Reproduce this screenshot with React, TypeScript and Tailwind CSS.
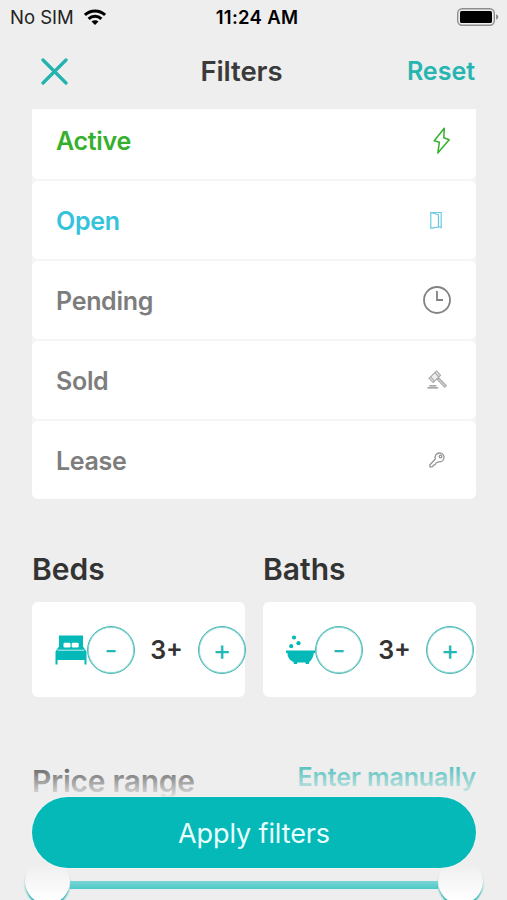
import { useState } from 'react';

const statuses = [
  { name: 'Active', color: 'text-[#35b02c]', icon: <BoltIcon /> },
  { name: 'Open', color: 'text-[#35c3dc]', icon: <DoorIcon /> },
  { name: 'Pending', color: 'text-[#7d7d7d]', icon: <ClockIcon /> },
  { name: 'Sold', color: 'text-[#7d7d7d]', icon: <GavelIcon /> },
  { name: 'Lease', color: 'text-[#7d7d7d]', icon: <KeyIcon /> },
];

function WifiIcon() {
  return (
    <svg width="22" height="16" viewBox="0 0 22 16" fill="none" stroke="#000" strokeWidth="3">
      <path d="M.9 6C6.6.6 15.4.6 21.1 6" />
      <path d="M4.6 9.900c3.600-3.400 9.200-3.400 12.800 0" />
      <path d="M7.5 12.600c2-1.800 5-1.800 7 0L11 16z" fill="#000" stroke="none" />
    </svg>
  );
}

function BatteryIcon() {
  return (
    <svg width="43" height="18" viewBox="0 0 43 18">
      <rect x="0.7" y="0.7" width="36.6" height="16.6" rx="4.5" fill="none" stroke="#8e8e8e" strokeWidth="1.4" />
      <rect x="3" y="3" width="32" height="12" rx="1.6" fill="#000" />
      <path d="M39 6.3q2.4.8 2.4 2.7T39 11.7z" fill="#8e8e8e" />
    </svg>
  );
}

function BoltIcon() {
  return (
    <svg width="18" height="28" viewBox="0 0 18 28" fill="none" stroke="#35b02c" strokeWidth="1.5" strokeLinejoin="round">
      <path d="M11.3 2.300 1.200 14.700l5.200 1.600L4.800 27 16.200 13.800l-5.400-2z" />
    </svg>
  );
}

function DoorIcon() {
  return (
    <svg className="mr-[8px]" width="13" height="18" viewBox="0 0 13 18" fill="none" stroke="#6bcbe2" strokeWidth="1.2">
      <path d="M.8 1.500 8.400 3.800V16L.8 17.200z" />
      <path d="M.8 1.500h10.400v16M11.200 15.800H8.500" />
    </svg>
  );
}

function ClockIcon() {
  return (
    <svg width="28" height="28" viewBox="0 0 28 28" fill="none" stroke="#828282" strokeWidth="1.8">
      <circle cx="14" cy="14" r="13" />
      <path d="M14 5v9h6" />
    </svg>
  );
}

function GavelIcon() {
  return (
    <svg className="mr-[4px]" width="20" height="20" viewBox="0 0 20 20" fill="none" stroke="#a8a8a8" strokeWidth="1.1">
      <path d="m2 8.300 7.500-7.200 4 4.200-7.300 7.200z" fill="#eee" />
      <path d="m3.500 6.800 4.200 4.300M7.800 2.700l4.200 4.300" />
      <path d="m10.300 9.300 7.300 8 1.700-1.700-7.500-7.500z" fill="#d5d5d5" />
      <path d="M2.300 15.800h7M.4 17.800h10.800" stroke="#8c8c8c" strokeWidth="1.2" />
    </svg>
  );
}

function KeyIcon() {
  return (
    <svg className="mr-[6px]" width="16" height="16" viewBox="0 0 16 16" fill="none" stroke="#959595" strokeWidth="1.3" strokeLinejoin="round">
      <path d="M6.3 7C5.4 3.800 7.200 1 10.400 1c3 0 4.800 2.200 4.600 4.800-.3 2.800-2.800 4.300-5.400 4.100L7 11l-.9 1.700-1.500.5-.9 1.500-2.700.3-.2-2z" />
      <circle cx="11.500" cy="4.500" r="1.300" />
    </svg>
  );
}

function BedIcon() {
  return (
    <svg className="shrink-0" width="32" height="30" viewBox="0 0 32 30" fill="#05b9b8">
      <path d="M4 .5h24v11l3.500 5V29.500h-2V25H2.500v4.500H.5V16.500L4 11.500z" />
      <rect x="8.500" y="7.700" width="7" height="4.800" rx="1.200" fill="#fff" />
      <rect x="16.700" y="7.700" width="7" height="4.800" rx="1.200" fill="#fff" />
      <path d="M2.500 15.200h27" stroke="#fff" strokeWidth="0.800" />
    </svg>
  );
}

function BathIcon() {
  return (
    <svg className="shrink-0" width="30" height="30" viewBox="0 0 30 30" fill="#05b9b8">
      <circle cx="9" cy="2.500" r="2.100" />
      <circle cx="13.500" cy="8.200" r="2.100" />
      <circle cx="6.200" cy="11.200" r="2.100" />
      <path d="M1 15.500H30V18h-1.200c-.4 4-2 6.800-4.400 9l-.6 2h-3l-.4-1.400h-8l-.4 1.400H9l-.6-2C5 25.500 2.600 22.500 2.400 18H1z" />
    </svg>
  );
}

function Stepper({ value, onChange }: { value: number; onChange: (v: number) => void }) {
  const button = 'w-[48px] h-[48px] shrink-0 rounded-full border border-[#45b9b4] shadow-[inset_0_0_1px_0.5px_#45b9b4] text-[#22b8b5] flex items-center justify-center';
  return (
    <>
      <button onClick={() => onChange(Math.max(0, value - 1))} className={button}>
        <span className="text-[28px] leading-none">-</span>
      </button>
      <span className="w-[63px] shrink-0 text-center text-[25px] leading-8 font-semibold text-[#333]">{value}+</span>
      <button onClick={() => onChange(value + 1)} className={button}>
        <span className="text-[28px] leading-none">+</span>
      </button>
    </>
  );
}

export default function App() {
  const [beds, setBeds] = useState(3);
  const [baths, setBaths] = useState(3);

  return (
    <main className="relative w-[507px] h-[900px] overflow-hidden bg-[#eee] font-['Inter',sans-serif] flex flex-col">
      <div className="h-[34px] shrink-0 grid grid-cols-3 items-center pl-[10px] pr-[7px] text-black">
        <div className="flex items-center gap-[10px]">
          <span className="pt-0.5 text-[18.5px] text-[#222] whitespace-nowrap">No SIM</span>
          <WifiIcon />
        </div>
        <span className="pl-1 pt-0.5 text-[18.5px] tracking-[0.3px] font-semibold text-center whitespace-nowrap">11:24 AM</span>
        <div className="flex justify-end"><BatteryIcon /></div>
      </div>

      <header className="h-[75px] shrink-0 flex items-center justify-between pl-[41px] pr-8">
        <button>
          <svg width="27" height="27" viewBox="0 0 27 27" fill="none" stroke="#22b3b0" strokeWidth="3.2" strokeLinecap="round">
            <path d="m2 2 23 23M25 2 2 25" />
          </svg>
        </button>
        <h1 className="text-[27.5px] tracking-[-0.1px] font-semibold text-[#3a3a3a] pl-[8px]">Filters</h1>
        <button className="text-[25px] font-semibold text-[#27b5b1]">Reset</button>
      </header>

      <ul className="ml-8 mr-[31px] shrink-0 flex flex-col gap-0.5 bg-[#f5f5f5] rounded-b-md">
        {statuses.map((s, i) => (
          <li
            key={s.name}
            className={`flex items-center justify-between pl-6 pr-[25px] bg-white ${i === 0 ? 'h-[70px] pb-[8px] rounded-b-md' : 'h-[78px] rounded-md'}`}>
            <span className={`pt-[3px] text-[25px] tracking-[-0.3px] font-semibold ${s.color}`}>{s.name}</span>
            {s.icon}
          </li>
        ))}
      </ul>

      <section className="ml-8 mr-[31px] mt-[48px] shrink-0 grid grid-cols-2 gap-[18px]">
        <div>
          <h2 className="text-[30px] leading-[44px] font-semibold text-[#333]">Beds</h2>
          <div className="mt-[11px] h-[95px] rounded-md bg-white flex items-center pl-[23px]">
            <BedIcon />
            <Stepper value={beds} onChange={setBeds} />
          </div>
        </div>
        <div>
          <h2 className="text-[30px] leading-[44px] font-semibold text-[#333]">Baths</h2>
          <div className="mt-[11px] h-[95px] rounded-md bg-white flex items-center pl-[22px]">
            <BathIcon />
            <Stepper value={baths} onChange={setBaths} />
          </div>
        </div>
      </section>

      <section className="ml-8 mr-[31px] mt-[63px] shrink-0">
        <div className="flex justify-between items-start">
          <h2 className="text-[30px] leading-[42px] tracking-[-0.3px] font-semibold text-[#333]">Price range</h2>
          <button className="text-[25px] leading-[34px] tracking-[-0.1px] font-semibold text-[#22b3b0]">Enter manually</button>
        </div>
        <div className="-mx-[7px] mt-[57px] flex items-center">
          <span className="w-[45px] h-[45px] rounded-full bg-white shadow-[0_2px_2px_#05a9a8]" />
          <span className="flex-1 h-2 mt-[7px] bg-[#05b9b8]" />
          <span className="w-[45px] h-[45px] rounded-full bg-white shadow-[0_2px_2px_#05a9a8]" />
        </div>
      </section>

      <footer className="absolute inset-x-0 bottom-0 h-[145px] pt-[42px] pl-8 pr-[31px] bg-[linear-gradient(to_bottom,#eeeeee00_0px,#eeeeee_45px,#eeeeee_108px,#eeeeee00_145px)]">
        <button className="w-full h-[71px] pt-[3px] rounded-full bg-[#05b9b8] shadow-[0_0_2px_#fff] text-[27px] tracking-[-0.1px] text-[#e9ffff]">
          Apply filters
        </button>
      </footer>
    </main>
  );
}
